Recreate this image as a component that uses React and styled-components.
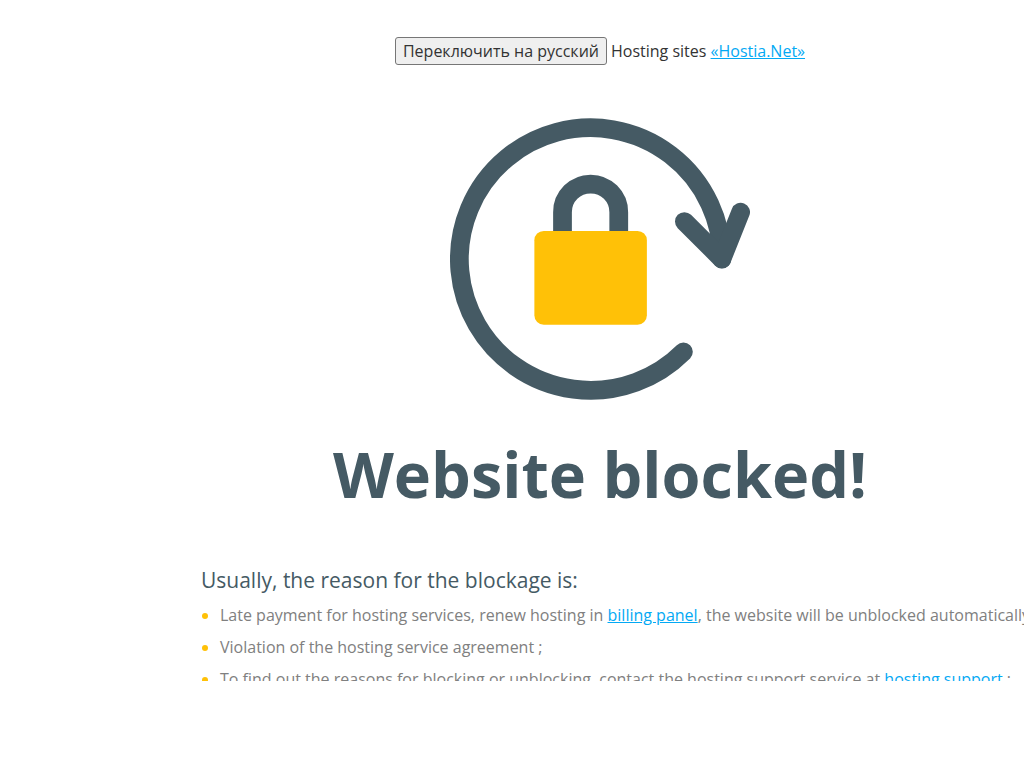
import React, { useState } from 'react';

import styled, { createGlobalStyle } from 'styled-components';

const GlobalStyle = createGlobalStyle`
  body {
    margin: 0;
    overflow: hidden;
    background: #fff;
    color: #333;
    font-family: 'Open Sans', sans-serif;
    font-size: 16px;
    line-height: 24px;
  }
`;

const Page = styled.div`
  display: flex;
  flex-direction: column;
  box-sizing: border-box;
  min-width: 1200px;
  height: 100vh;
  padding: 37px 0 87px;
`;

const Content = styled.main`
  display: flex;
  flex-direction: column;
  align-items: center;
  overflow: hidden;
`;

const TopBar = styled.header`
  display: flex;
  align-items: center;
  gap: 4px;
`;

const LangButton = styled.button`
  height: 28px;
  padding: 0 7px;
  border: 1px solid #767676;
  border-radius: 3px;
  background: #efefef;
  color: #333;
  font: inherit;
  cursor: pointer;
`;

const Link = styled.a`
  color: #03a9f4;
  text-decoration: underline;
`;

const Icon = styled.svg`
  flex: none;
  width: 300px;
  height: 282px;
  margin-top: 53px;
  fill: none;
  stroke: #455a64;
  stroke-width: 2;
  stroke-linecap: round;
  stroke-linejoin: round;
`;

const Title = styled.h1`
  margin: 30px 0 0;
  color: #455a64;
  font-size: 63px;
  font-weight: 700;
  line-height: 88px;
`;

const Reasons = styled.section`
  width: 798px;
  margin-top: 46px;
  white-space: nowrap;
`;

const Subtitle = styled.h2`
  margin: 0;
  color: #455a64;
  font-size: 21px;
  font-weight: 400;
  line-height: 32px;
`;

const List = styled.ul`
  margin: 3px 0 0;
  padding: 0;
  list-style: none;
`;

const Item = styled.li`
  display: flex;
  align-items: center;
  gap: 12px;
  height: 32px;
  color: #808080;

  &::before {
    content: '';
    flex: none;
    width: 6px;
    height: 6px;
    margin: 2px 0 0 1px;
    border-radius: 50%;
    background: #ffc107;
  }
`;

const texts = {
  en: {
    button: 'Переключить на русский',
    hosting: 'Hosting sites',
    title: 'Website blocked!',
    subtitle: 'Usually, the reason for the blockage is:',
    payment: 'Late payment for hosting services, renew hosting in ',
    billing: 'billing panel',
    unblocked: ', the website will be unblocked automatically ;',
    violation: 'Violation of the hosting service agreement ;',
    contact:
      'To find out the reasons for blocking or unblocking, contact the hosting support service at ',
    support: 'hosting support',
  },
  ru: {
    button: 'Switch to English',
    hosting: 'Хостинг сайтов',
    title: 'Сайт заблокирован!',
    subtitle: 'Обычно причина блокировки:',
    payment: 'Просрочена оплата хостинга, продлите хостинг в ',
    billing: 'панели биллинга',
    unblocked: ', сайт будет разблокирован автоматически ;',
    violation: 'Нарушение договора на услуги хостинга ;',
    contact: 'Чтобы узнать причину блокировки, обратитесь в ',
    support: 'поддержку хостинга',
  },
};

const LockIcon = () => (
  <Icon viewBox="0 0 32 30" aria-hidden="true">
    <path d="M24.9 24.9A14 14 0 1 1 29 15" />
    <path d="M25 11l4 4 2-5" />
    <path d="M12 13v-3a3 3 0 0 1 6 0v3" />
    <rect x="9" y="12" width="12" height="10" rx="1" fill="#ffc107" stroke="none" />
  </Icon>
);

const App = () => {
  const [lang, setLang] = useState('en');
  const t = texts[lang];

  return (
    <Page>
      <GlobalStyle />
      <Content>
        <TopBar>
          <LangButton type="button" onClick={() => setLang(lang === 'en' ? 'ru' : 'en')}>
            {t.button}
          </LangButton>
          <span>
            {t.hosting} <Link href="#">«Hostia.Net»</Link>
          </span>
        </TopBar>
        <LockIcon />
        <Title>{t.title}</Title>
        <Reasons>
          <Subtitle>{t.subtitle}</Subtitle>
          <List>
            <Item>
              <span>
                {t.payment}
                <Link href="#">{t.billing}</Link>
                {t.unblocked}
              </span>
            </Item>
            <Item>
              <span>{t.violation}</span>
            </Item>
            <Item>
              <span>
                {t.contact}
                <Link href="#">{t.support}</Link> ;
              </span>
            </Item>
          </List>
        </Reasons>
      </Content>
    </Page>
  );
};

export default App;
